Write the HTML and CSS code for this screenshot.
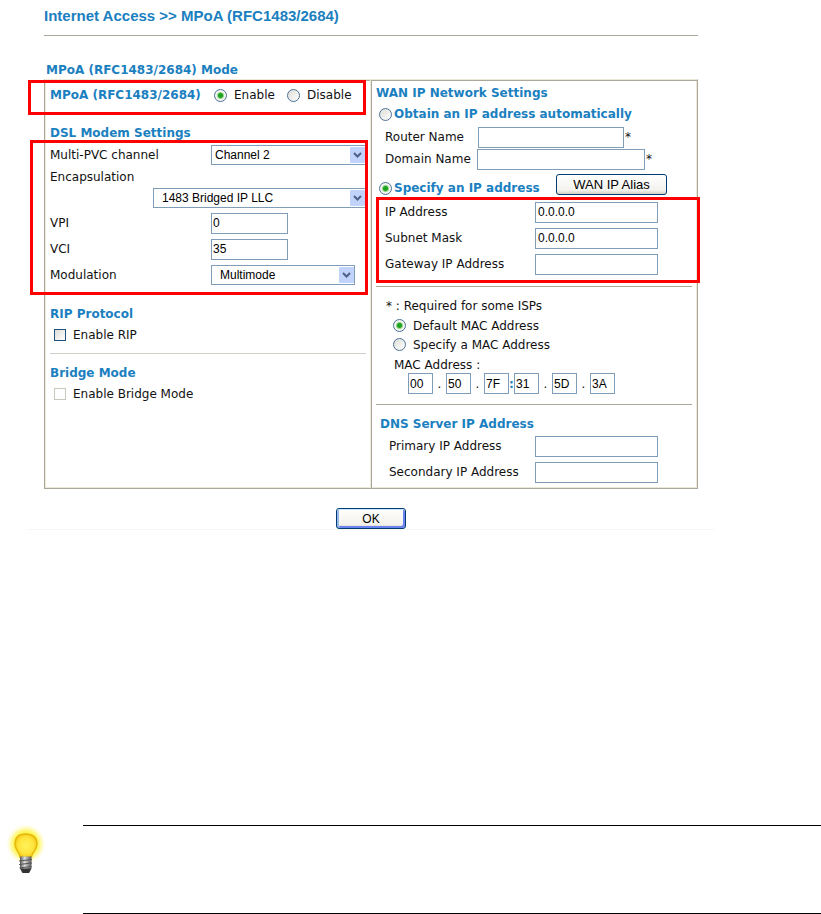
FILE: index.html
```html
<!DOCTYPE html>
<html lang="en">
<head>
<meta charset="utf-8">
<title>Internet Access - MPoA (RFC1483/2684)</title>
<link rel="stylesheet" href="styles.css">
</head>
<body>
<main>
  <h1>Internet Access &gt;&gt; MPoA (RFC1483/2684)</h1>
  <form>
    <h2 class="mode">MPoA (RFC1483/2684) Mode</h2>
    <div class="panel">
      <section class="col">
        <div class="row toggle marked" role="radiogroup" aria-labelledby="mpoa">
          <h2 id="mpoa">MPoA (RFC1483/2684)</h2>
          <label class="choice"><input type="radio" name="mpoa" checked>Enable</label>
          <label class="choice"><input type="radio" name="mpoa">Disable</label>
        </div>
        <h2 class="dsl">DSL Modem Settings</h2>
        <div class="modem marked">
          <div class="row field short">
            <label for="pvc">Multi-PVC channel</label>
            <span class="drop"><select id="pvc"><option>Channel 2</option></select><svg viewBox="0 0 15 16"><rect width="15" height="16" rx="1"/><path d="M4 6l3.500 3.500L11 6"/></svg></span>
          </div>
          <div class="row short"><label for="encap">Encapsulation</label></div>
          <div class="row encap">
            <span class="drop indent"><select id="encap"><option>1483 Bridged IP LLC</option></select><svg viewBox="0 0 15 16"><rect width="15" height="16" rx="1"/><path d="M4 6l3.500 3.500L11 6"/></svg></span>
          </div>
          <div class="row field"><label for="vpi">VPI</label><input class="num" id="vpi" type="text" value="0"></div>
          <div class="row field"><label for="vci">VCI</label><input class="num" id="vci" type="text" value="35"></div>
          <div class="row field">
            <label for="mod">Modulation</label>
            <span class="drop indent modulation"><select id="mod"><option>Multimode</option></select><svg viewBox="0 0 15 16"><rect width="15" height="16" rx="1"/><path d="M4 6l3.500 3.500L11 6"/></svg></span>
          </div>
        </div>
        <h2 class="rip">RIP Protocol</h2>
        <label class="choice check"><input type="checkbox">Enable RIP</label>
        <hr class="pale">
        <h2>Bridge Mode</h2>
        <label class="choice check"><input type="checkbox" disabled>Enable Bridge Mode</label>
      </section>

      <section class="col wan">
        <h2>WAN IP Network Settings</h2>
        <label class="choice strong"><input type="radio" name="wan">Obtain an IP address automatically</label>
        <div class="row name"><label for="router">Router Name</label><input id="router" type="text"><span>*</span></div>
        <div class="row name domain"><label for="domain">Domain Name</label><input id="domain" type="text"><span>*</span></div>
        <div class="row specify">
          <label class="choice strong"><input type="radio" name="wan" checked>Specify an IP address</label>
          <button type="button" class="alias">WAN IP Alias</button>
        </div>
        <div class="address marked">
          <div class="row ip"><label for="ip">IP Address</label><input id="ip" type="text" value="0.0.0.0"></div>
          <div class="row ip"><label for="mask">Subnet Mask</label><input id="mask" type="text" value="0.0.0.0"></div>
          <div class="row ip"><label for="gateway">Gateway IP Address</label><input id="gateway" type="text"></div>
        </div>
        <hr>
        <p class="required">* : Required for some ISPs</p>
        <label class="choice mac"><input type="radio" name="mac" checked>Default MAC Address</label>
        <label class="choice mac"><input type="radio" name="mac">Specify a MAC Address</label>
        <p class="maclabel" id="maclabel">MAC Address :</p>
        <div class="octets" role="group" aria-labelledby="maclabel">
          <input type="text" value="00" aria-labelledby="maclabel"><span>.</span>
          <input type="text" value="50" aria-labelledby="maclabel"><span>.</span>
          <input type="text" value="7F" aria-labelledby="maclabel"><span class="colon">:</span>
          <input type="text" value="31" aria-labelledby="maclabel"><span>.</span>
          <input type="text" value="5D" aria-labelledby="maclabel"><span>.</span>
          <input type="text" value="3A" aria-labelledby="maclabel">
        </div>
        <hr>
        <div class="dns">
          <h2>DNS Server IP Address</h2>
          <div class="row ip"><label for="dns1">Primary IP Address</label><input id="dns1" type="text"></div>
          <div class="row ip"><label for="dns2">Secondary IP Address</label><input id="dns2" type="text"></div>
        </div>
      </section>
    </div>
    <div class="actions"><button type="submit" class="ok">OK</button></div>
  </form>
</main>
<aside class="note">
  <svg class="bulb" viewBox="0 0 40 52" aria-hidden="true">
    <defs>
      <radialGradient id="glow"><stop offset="0.5" stop-color="#fff12e"/><stop offset="0.7" stop-color="#fff766" stop-opacity=".8"/><stop offset="1" stop-color="#fffbd0" stop-opacity="0"/></radialGradient>
      <radialGradient id="glass"><stop offset="0" stop-color="#fff25a"/><stop offset="0.7" stop-color="#ffe43c"/><stop offset="1" stop-color="#f5cc20"/></radialGradient>
      <linearGradient id="metal"><stop offset="0" stop-color="#555"/><stop offset="0.4" stop-color="#ddd"/><stop offset="1" stop-color="#555"/></linearGradient>
    </defs>
    <circle cx="20" cy="19" r="20" fill="url(#glow)"/>
    <path d="M14 32C13.500 27 9 25 9 19C9 12 13 9 19.500 9S31 12 31 19C31 25 26 27 25.500 32Z" fill="url(#glass)" stroke="#e5b90e" stroke-width="1.500"/>
    <path d="M14 31.500h11.500v12l-2 4h-7.500l-2-4z" fill="url(#metal)"/>
    <path d="M13 36l13-1.500M13 39.500l13-1.500M13.500 43l12-1.500" stroke="#555" stroke-width="1"/>
    <path d="M14.500 43.500h10.500l-2 4.500h-6.500z" fill="#333"/>
  </svg>
  <div class="rules"></div>
</aside>
</body>
</html>
```
FILE: styles.css
```css
* { box-sizing: border-box; }
body {
  margin: 0;
  background: #fff;
  color: #111;
  font: 12px/18px "DejaVu Sans", sans-serif;
}
main { padding: 0 123px 0 44px; }
h1, h2, p { margin: 0; }
h1 {
  height: 36px;
  border-bottom: 1px solid #aca899;
  color: #1b80c0;
  font: bold 15px/32px "Liberation Sans", sans-serif;
}
h2, .strong { color: #1b80c0; font-size: 12px; font-weight: bold; line-height: 18px; white-space: nowrap; }
.mode { padding: 25px 0 0 2px; }
.panel {
  display: grid;
  grid-template-columns: 327fr 327fr;
  border: 1px solid #aca899;
  border-top-color: #ece9d8;
  box-shadow: inset 0 -1px #ece9d8, inset -1px 0 #ece9d8;
  min-height: 410px;
}
.col {
  padding: 0 5px 0 4px;
  border-left: 1px solid #ece9d8;
  border-top: 1px solid #aca899;
  min-width: 0;
}
.col + .col {
  border-left-color: #aca899;
  box-shadow: -1px 0 #ece9d8;
  padding: 3px 5px 3px 4px;
}
.row { display: flex; align-items: center; height: 26px; white-space: nowrap; }
.marked { position: relative; }
.marked::after {
  content: "";
  position: absolute;
  z-index: 2;
  border: 3px solid #f00;
  pointer-events: none;
}
.toggle { display: grid; grid-template-columns: 164px 73px auto; height: 28px; }
.toggle::after { inset: -1px 0 -6px -22px; }
.choice { display: flex; align-items: center; gap: 7px; height: 20px; }
.dsl { margin-top: 15px; }
.modem { padding-top: 2px; }
.modem::after { inset: -2px -2px -7px -20px; }
.short { height: 22px; }
.encap { height: 22px; padding-left: 103px; align-items: flex-start; }
.field { display: grid; grid-template-columns: 161px 1fr; }
input[type="text"], select {
  margin: 0;
  height: 21px;
  border: 1px solid #7f9db9;
  border-radius: 0;
  background: #fff;
  color: #000;
  font: 12px "Liberation Sans", sans-serif;
  padding: 0 2px;
  min-width: 0;
}
input[type="text"].num { width: 77px; padding: 0 1px; }
.drop { position: relative; display: block; width: 100%; height: 20px; }
.drop select { appearance: none; width: 100%; height: 20px; padding-left: 3px; display: block; }
.drop svg { position: absolute; top: 2px; right: 1px; width: 15px; height: 16px; pointer-events: none; }
.drop rect { fill: #c1d3fb; }
.drop path { fill: none; stroke: #4d6185; stroke-width: 2; }
.drop.indent select { padding-left: 8px; }
.drop.modulation { width: 144px; }
input[type="radio"], input[type="checkbox"] {
  appearance: none;
  flex: none;
  margin: 0;
  width: 13px;
  height: 13px;
  border: 1px solid #4a7297;
  background: linear-gradient(135deg, #dcdcd7, #fff);
}
input[type="radio"] { border-radius: 50%; }
input[type="radio"]:checked { background: radial-gradient(circle, #21a121 0 2px, #8fd685 3px, #f4f4f0 4px); }
input[type="checkbox"] { width: 12px; height: 12px; border-color: #1c5180; }
input[type="checkbox"]:disabled { border-color: #cac8bb; background: #fff; }
.check { padding-left: 4px; margin-top: 2px; }
.rip { margin-top: 17px; }
hr { height: 1px; margin: 0; border: 0; background: #aca899; }
.pale { margin: 8px 0 10px; background: #d0d0c8; }
.strong { gap: 2px; padding-left: 3px; }
.wan > .strong { margin-top: 2px; }
.name { display: grid; grid-template-columns: 93px 146px auto; height: 22px; margin: 2px 0 0 9px; }
.name span { padding-left: 1px; }
.domain { grid-template-columns: 92px 168px auto; margin-top: 0; }
.specify { height: 28px; justify-content: space-between; padding: 4px 25px 0 0; align-items: flex-start; }
.specify .choice { margin-top: 4px; }
button {
  height: 21px;
  border: 1px solid #003c74;
  border-radius: 3px;
  background: linear-gradient(#fff, #f3f2ec 80%, #d6d0c5);
  color: #000;
  font: 12px "Liberation Sans", sans-serif;
  padding: 0;
}
.alias { width: 111px; font-size: 13px; }
.address { padding: 1px 0 9px; }
.address::after { inset: -1px -8px 3px 0; }
.ip { display: grid; grid-template-columns: 150px 123px; padding-left: 9px; }
.required { padding: 10px 0 1px 10px; }
.mac { height: 19px; padding-left: 17px; }
.maclabel { padding: 2px 0 0 18px; height: 19px; line-height: 18px; }
.octets { display: flex; align-items: center; padding-left: 32px; height: 21px; }
.octets input[type="text"] { width: 25px; padding: 0 1px; flex: none; }
.octets span { width: 13px; text-align: center; flex: none; }
.octets .colon { width: 5px; color: #1b80c0; font-weight: bold; }
.octets + hr { margin-top: 10px; }
.dns { padding: 10px 0 0 4px; }
.dns .ip { grid-template-columns: 146px 123px; }
.actions {
  display: flex;
  justify-content: center;
  margin: 0 -17px 0 -16px;
  padding: 19px 1px 0 0;
  border-bottom: 1px solid #f6f6f2;
}
.ok { width: 70px; box-shadow: inset 0 1px #cee7ff, inset 2px 0 #98b8ea, inset -2px -2px #6982ee; }
.note { display: grid; grid-template-columns: 83px 1fr; margin-top: 295px; }
.bulb { width: 40px; height: 52px; margin-left: 6px; }
.rules { height: 89px; border: solid #000; border-width: 1px 0; }
```
